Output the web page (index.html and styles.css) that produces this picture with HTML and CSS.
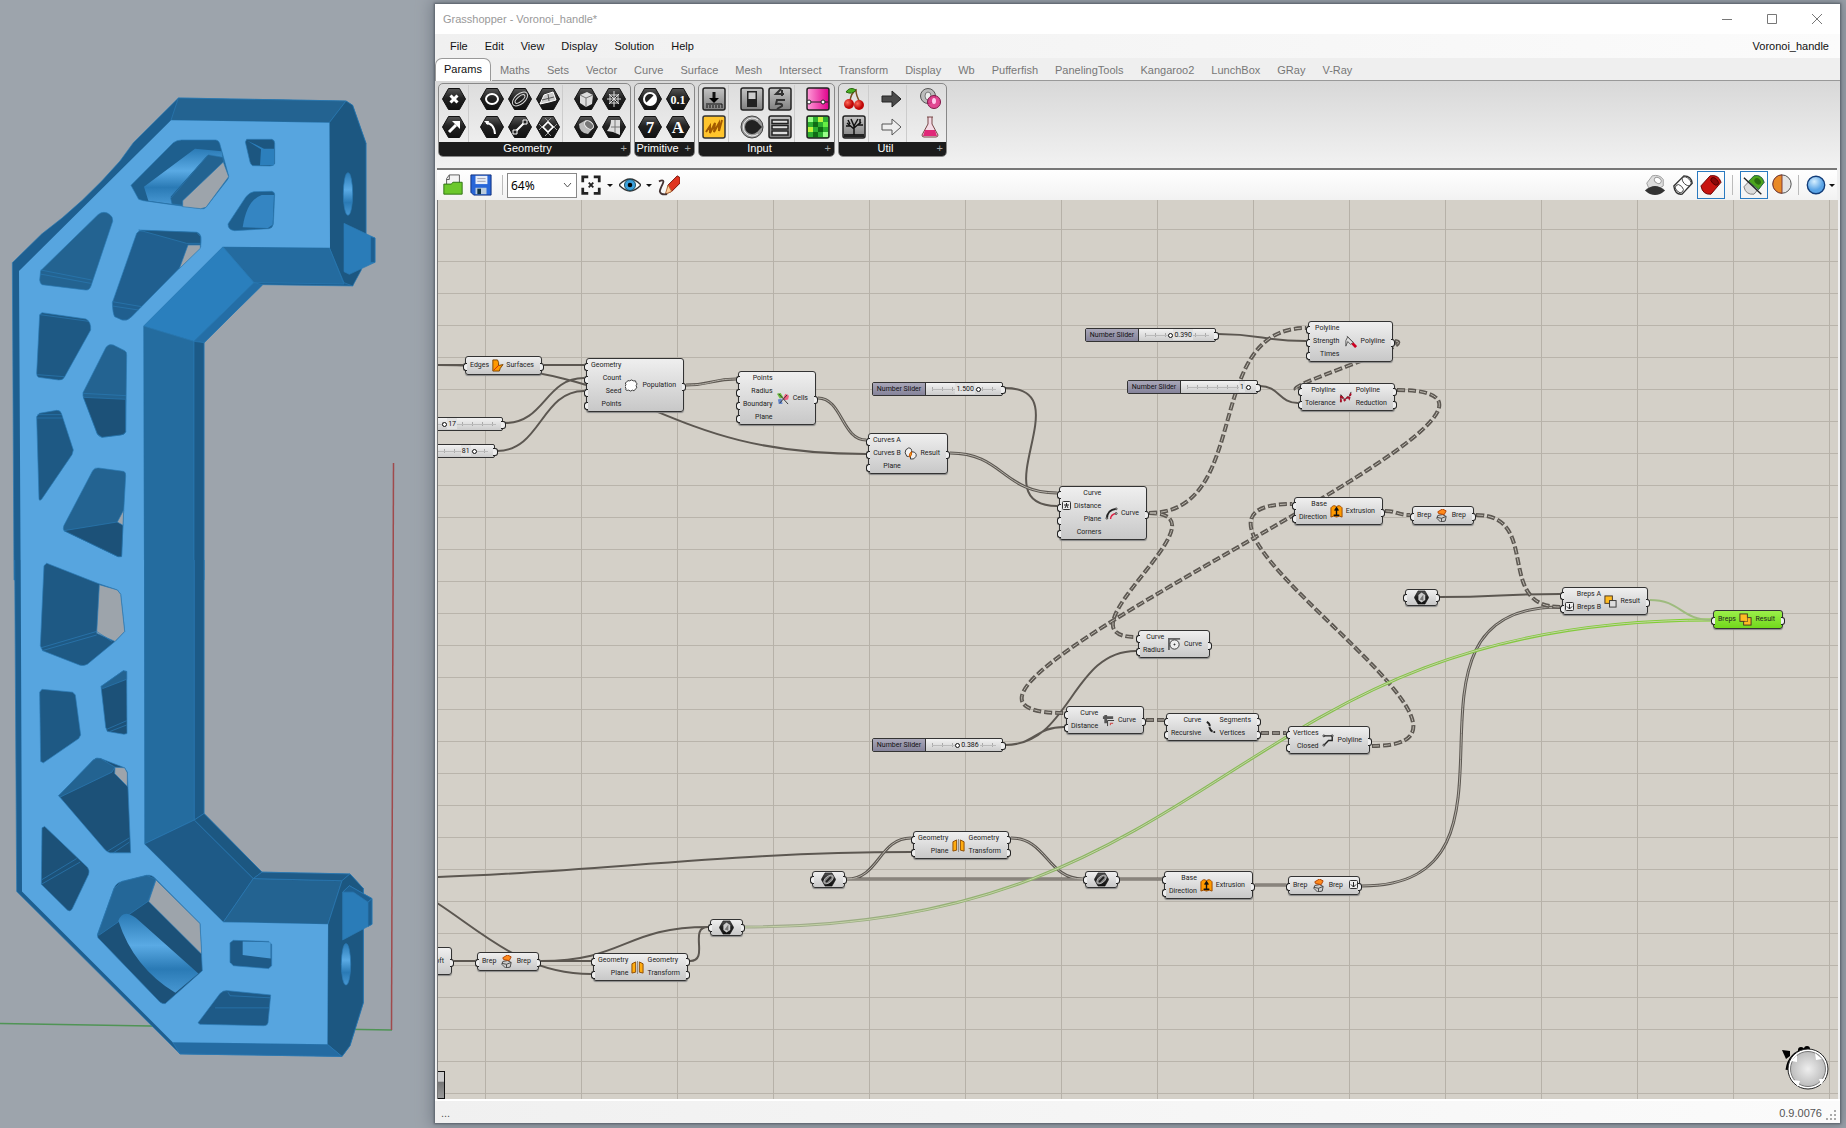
FILE: index.html
```html
<!DOCTYPE html>
<html lang="en">
<head>
<meta charset="utf-8">
<title>Grasshopper - Voronoi_handle*</title>
<link rel="stylesheet" href="styles.css">
</head>
<body>
<svg class="defs" aria-hidden="true">
  <defs>
    <linearGradient id="gHex" x1="0" y1="0" x2="0" y2="1"><stop offset="0" stop-color="#555"/><stop offset=".45" stop-color="#222"/><stop offset="1" stop-color="#111"/></linearGradient>
    <linearGradient id="gGrey" x1="0" y1="0" x2="0" y2="1"><stop offset="0" stop-color="#c4c4c4"/><stop offset="1" stop-color="#808080"/></linearGradient>
    <linearGradient id="gPink" x1="0" y1="0" x2="1" y2="0"><stop offset="0" stop-color="#ff9ad8"/><stop offset="1" stop-color="#e0008c"/></linearGradient>
    <linearGradient id="gBore" x1="0" y1="0" x2="0" y2="1"><stop offset="0" stop-color="#2a7ab5"/><stop offset=".4" stop-color="#5aaae4"/><stop offset=".7" stop-color="#2a7ab5"/><stop offset="1" stop-color="#4797d2"/></linearGradient>
    <linearGradient id="gWire" gradientUnits="userSpaceOnUse" x1="308" y1="0" x2="1274" y2="0"><stop offset="0" stop-color="#a3a992"/><stop offset=".35" stop-color="#8bb563"/><stop offset="1" stop-color="#80d030"/></linearGradient>
    <radialGradient id="gBlue" cx=".4" cy=".3"><stop offset="0" stop-color="#d6efff"/><stop offset="1" stop-color="#5aa4e6"/></radialGradient>
    <radialGradient id="gKnob"><stop offset="0" stop-color="#eee"/><stop offset="1" stop-color="#bdbdbd"/></radialGradient>
    <radialGradient id="gRed" cx=".35" cy=".35"><stop offset="0" stop-color="#ff6a5a"/><stop offset="1" stop-color="#c00808"/></radialGradient>

    <g id="hex"><path d="M6.500 1.500h11L23.500 12l-6 10.500h-11L.5 12z" fill="url(#gHex)" stroke="#111"/></g>
    <g id="tile"><rect x="1" y="1" width="22" height="22" rx="2" fill="url(#gGrey)" stroke="#222" stroke-width="1.500"/></g>

    <symbol id="n-surface" viewBox="0 0 14 14"><path d="M2 1h5q2 3 1 6l5-1-3 4-1 3H2z" fill="#f90" stroke="#7a4300"/><path d="M3 12l5-5" stroke="#c21"/></symbol>
    <symbol id="n-cloud" viewBox="0 0 14 14"><path d="M2 3q1-2 3-1 2-2 4 0 3-1 3 2 2 1 0 3 2 3-1 4-1 3-3 1-2 2-4 0-4 1-3-2-2-2 0-4-2-2 1-3z" fill="#fff" stroke="#333"/></symbol>
    <symbol id="n-cells" viewBox="0 0 14 14"><path d="M1 2l4-1 3 5-4 1z" fill="#6cc040"/><path d="M8 6l2-4 4 2-1 4-4 1z" fill="#f06080"/><path d="M2 8l4-1 1 6-4 0z" fill="#68c"/><path d="M3 2l10 11M12 3l-8 9" stroke="#333"/></symbol>
    <symbol id="n-region" viewBox="0 0 14 14"><path d="M5 1q4 0 3 5-1 5-5 4Q0 6 2 3zM9 5q5 1 4 5-2 4-6 3-1-5 2-8z" fill="#fff" fill-opacity=".6" stroke="#333"/><path d="M8 5q-3 2-2 6 3-2 2-6z" fill="#fa2" stroke="#c50"/></symbol>
    <symbol id="n-offset" viewBox="0 0 14 14"><path d="M2 13Q2 3 12 2" fill="none" stroke="#222" stroke-width="2"/><path d="M6 13q0-5 6-6" fill="none" stroke="#d24" stroke-width="1.500"/><g fill="#fff" stroke="#333"><circle cx="2" cy="12" r="1"/><circle cx="12" cy="2" r="1"/><circle cx="12" cy="7" r="1"/></g></symbol>
    <symbol id="n-smooth" viewBox="0 0 14 14"><path d="M2 12V6l2-4 6 6-3 2-3-3z" fill="#ddd" stroke="#555"/><path d="M9 9l4 4" stroke="#c02" stroke-width="3"/><path d="M3 1l7 7" stroke="#555"/></symbol>
    <symbol id="n-reduce" viewBox="0 0 14 14"><path d="M2 12V4l4 5 5-3 2-5" fill="none" stroke="#333"/><path d="M2 12V5l4 5 4-4 1 2 2-6" fill="none" stroke="#a81028" stroke-width="2" stroke-dasharray="3 1"/></symbol>
    <symbol id="n-extrude" viewBox="0 0 14 14"><path d="M1 3q3-4 6-1 3-3 6 1v10q-3-2-6 0-3-2-6 0z" fill="#ff9a00" stroke="#984800"/><path d="M7 12V4M5 6l2-3 2 3M4 11h6" fill="none" stroke="#111" stroke-width="1.500"/></symbol>
    <symbol id="n-cap" viewBox="0 0 14 14"><path d="M3 7l5-1 4 2-1 5-5 1-4-4z" fill="#ccc" stroke="#444"/><path d="M2 9l5 1 5-2M7 10v4" stroke="#444" fill="none"/><path d="M3 3l5-3 4 2-2 4-6-1z" fill="#ff8a1c" stroke="#b04000"/></symbol>
    <symbol id="n-union" viewBox="0 0 14 14"><rect x="5" y="5" width="8" height="8" fill="#fb2" stroke="#432"/><rect x="1" y="1" width="8" height="8" fill="#fb2" stroke="#432"/><path d="M6 5h3v4H6z" fill="#fb2"/></symbol>
    <symbol id="n-diff" viewBox="0 0 14 14"><rect x="1" y="1" width="8" height="8" fill="#fb2" stroke="#432"/><rect x="6" y="6" width="7" height="7" fill="#ddd" stroke="#333"/></symbol>
    <symbol id="n-fillet" viewBox="0 0 14 14"><path d="M1 13V1h12" fill="none" stroke="#666" stroke-width="2"/><circle cx="7" cy="7" r="5" fill="#eee" stroke="#333"/><path d="M7 6v2M6 7h2" stroke="#333"/></symbol>
    <symbol id="n-loose" viewBox="0 0 14 14"><path d="M1 4h11M4 1v9" stroke="#555" stroke-width="3"/><path d="M6 13V7h7" fill="none" stroke="#333"/><path d="M9 12v-2h3" stroke="#c33" fill="none"/></symbol>
    <symbol id="n-explode" viewBox="0 0 14 14"><path d="M3 1q4 2 3 6 1 5 6 5" fill="none" stroke="#222" stroke-width="2" stroke-dasharray="6 1"/></symbol>
    <symbol id="n-poly" viewBox="0 0 14 14"><path d="M2 2h9v5H7l-5 5" fill="none" stroke="#222" stroke-width="1.500"/><g fill="#fff" stroke="#222"><circle cx="2" cy="2" r="1"/><circle cx="11" cy="2" r="1"/><circle cx="2" cy="12" r="1"/></g></symbol>
    <symbol id="n-mirror" viewBox="0 0 14 14"><path d="M1 3l4-2v11l-4 1zM13 3L9 1v11l4 1z" fill="#ffac10" stroke="#8a4a00"/><path d="M7 0v14" stroke="#888"/></symbol>
    <symbol id="n-mesh" viewBox="0 0 24 24"><use href="#hex"/><path d="M7 8l5-4 6 4v8l-6 4-5-4z" fill="#ccc"/><path d="M9 15l6-8v10z" fill="#777"/></symbol>
    <symbol id="n-curve" viewBox="0 0 24 24"><use href="#hex"/><ellipse cx="12" cy="12" rx="9" ry="5" transform="rotate(-40 12 12)" fill="#888" stroke="#ddd"/><path d="M8 16l8-8" stroke="#222" stroke-width="3"/></symbol>
    <symbol id="n-flat" viewBox="0 0 9 9"><rect x=".5" y=".5" width="8" height="8" rx="1" fill="#eee" stroke="#333"/><path d="M4.500 2v5M2 4.500L4.500 7 7 4.500" fill="none" stroke="#222"/></symbol>
    <symbol id="n-graft" viewBox="0 0 9 9"><rect x=".5" y=".5" width="8" height="8" rx="1" fill="#eee" stroke="#333"/><path d="M2 4h5M4.500 2v2M3 7l1.500-3L6 7" fill="none" stroke="#222"/></symbol>
  </defs>
</svg>

<main class="desktop">
  <section class="viewport" aria-label="Model viewport">
    <svg class="model" viewBox="0 0 435 1128">
      <g fill="none" stroke-width="1.500"><path d="M0 1023.500L392 1030" stroke="#4f9455"/><path d="M393.500 463L391.500 1030" stroke="#a04a4c"/></g>
      <g transform="translate(0 80) scale(.33333)" stroke="#2b7ab4" stroke-width="2" stroke-linejoin="round">
        <path fill="#1e5f90" d="M535 54L1038 63 1058 76 1098 190V470L1058 618 788 614 612 788V1500H42L37 548 125 462Q250 370 360 243L400 188z"/>
        <path fill="#236391" d="M535 54L1038 63 988 128 513 121z"/>
        <path fill="#1c5781" d="M988 128L1038 63 1058 76 1098 190V470L1084 570 1058 618 1032 608 988 503z"/>
        <path fill="#246b9f" d="M668 500L988 503 1032 612 762 608z"/>
        <path fill="#2a7fbd" d="M668 500L762 608 582 784 430 738z"/>
        <path fill="#246ea6" d="M762 608L788 614 612 788 582 784z"/>
        <path fill="#246c9f" d="M430 738L582 784V1500H432z"/>
        <path fill="#1c5a87" d="M582 784L612 788V1500H582z"/>
        <path fill="#57a5df" stroke="none" d="M513 121L988 128 990 503 668 500 430 738 432 1500H62L57 573z"/>
        <path fill="#2a7cb8" d="M1032 430L1125 474V547L1048 583 1032 575z"/><path fill="#1e5f90" d="M1112 470L1125 474V547L1112 547z"/>
        <ellipse cx="1044" cy="342" rx="14" ry="64" fill="url(#gBore)"/>
        <path fill="#1e5f8e" d="M393 316L520 188Q530 180 545 180H648Q656 181 659 190L686 288Q686 296 680 302L618 382Q612 388 602 386L430 362 416 358z"/>
        <path fill="url(#gBore)" stroke="none" d="M432 320L585 206 665 214 668 232 622 226 512 350 516 372 445 362z"/>
        <path fill="#236391" d="M512 355L625 224 668 232 672 248 548 376 516 372z"/>
        <path fill="#9da4ab" d="M548 362L670 246 686 290 618 382 602 386 548 380z"/>
        <path fill="#1c5680" d="M740 178H815Q824 180 824 190V250Q822 258 810 258L758 257Q752 254 750 246L736 186z"/><path fill="#2c7fbc" stroke="none" d="M742 182L783 208 780 256H822V206H792z"/>
        <path fill="#1e5f8e" d="M684 432L738 350Q750 336 762 335L815 334Q824 336 824 344L820 432Q818 444 806 446L704 452Q684 450 684 432z"/><path fill="#3485c2" stroke="none" d="M728 442Q740 360 785 345H822L818 434 804 444z"/>
        <path fill="#236391" d="M122 572L294 404Q312 390 330 404 340 412 338 424L273 618Q268 632 256 630L126 614Q120 610 119 600z"/><path fill="none" d="M122 570L275 600M120 582L272 610"/>
        <path fill="#205f8f" d="M410 460Q416 450 430 452L590 457Q604 460 603 480L602 500 395 710Q382 724 366 720L344 710Q338 700 337 668z"/><path fill="#1e5882" d="M416 450L590 457 602 470 602 490 560 490z"/><path fill="#9da4ab" d="M564 495H601V505L538 566z"/><path fill="none" d="M337 665L425 680M337 678L415 690"/>
        <path fill="#1e5984" d="M119 704L126 698 258 717Q274 726 272 750L194 890Q188 902 176 900L116 892Q110 890 110 880z"/><path fill="none" d="M120 704L266 724M112 884L192 890"/>
        <path fill="#236391" d="M318 802Q326 790 340 795L374 812Q381 816 380 826L377 1055Q374 1064 362 1065L306 1072Q296 1070 292 1062L249 948V938z"/><path fill="#1c5178" d="M250 952L377 958V1055Q374 1064 362 1065L306 1072 292 1062z"/><path fill="none" d="M250 940L378 947"/>
        <path fill="#1e5984" d="M110 1010L118 1000 170 991Q180 990 184 1000L220 1110 216 1124 126 1256Q118 1266 117 1256z"/><path fill="none" d="M112 1004L184 1004M111 1014L188 1014"/>
        <path fill="#236391" d="M278 1172Q284 1162 296 1164L370 1174Q378 1176 377 1188L369 1330 365 1425Q364 1432 354 1430L192 1352Q188 1346 192 1336z"/><path fill="#1c5178" d="M192 1352L352 1326 369 1334 365 1430 354 1430z"/><path fill="#9da4ab" d="M352 1326L371 1290 369 1336z"/>
      </g>
      <g transform="translate(0 560) scale(.33333 .35714)" stroke="#2b7ab4" stroke-width="2" stroke-linejoin="round">
        <path fill="#1e5f90" d="M612 0V710L786 874 1050 879 1090 920V1240L1050 1360 1026 1390 540 1383 50 928 44 0"/>
        <path fill="#246c9f" d="M583 0V728L433 795 432 0"/>
        <path fill="#1c5a87" d="M612 0V710L583 728V0"/>
        <path fill="#1e5a87" d="M583 728L760 892 670 1014 433 795z"/>
        <path fill="#1c5781" d="M583 728L612 710 786 874 760 892z"/>
        <path fill="#236391" d="M760 892L1026 898 984 1020 670 1014z"/>
        <path fill="#1e5a87" d="M760 892L786 874 1050 879 1026 898z"/>
        <path fill="#1c5781" d="M984 1020L1026 898 1050 879 1090 920V1240L1050 1360 1026 1390 982 1356z"/>
        <path fill="#246ba2" d="M518 1350L982 1356 1026 1390 540 1383z"/>
        <path fill="#57a5df" stroke="none" d="M62 0H432L433 795 670 1014 984 1020 982 1356 518 1350 66 928z"/>
        <path fill="#2a7cb8" d="M1028 930L1048 912 1116 948V1020L1028 1064z"/><path fill="#1e5f90" d="M1028 930L1048 912 1116 948 1104 958 1060 930zM1104 958L1116 948V1020L1104 1026z"/>
        <ellipse cx="1038" cy="1132" rx="14" ry="58" fill="url(#gBore)"/>
        <path fill="#1e5984" d="M132 16L140 9 295 66 352 84 362 96 374 200 345 228 262 292Q250 298 238 294L128 254 121 240z"/><path fill="#9da4ab" d="M298 69L352 84 362 96 374 200 345 228 290 205z"/><path fill="none" d="M122 246L290 200 336 228M126 254L290 210"/>
        <path fill="#1e5984" d="M119 370L126 362 218 370 226 378 242 490 236 500 130 568 122 564z"/>
        <path fill="#1c5178" d="M303 354L370 310 380 312 381 486 372 488 322 480 317 468z"/><path fill="#236391" d="M303 354L370 310 380 312V334L308 360z"/><path fill="none" d="M318 475L380 450M330 480L380 462"/>
        <path fill="#1c5178" d="M176 660L280 560Q290 552 302 556L374 582 382 594 392 820 330 820Q320 818 312 808z"/><path fill="#236391" d="M176 660L280 560Q290 552 302 556L345 580 336 594 180 664z"/><path fill="#9da4ab" d="M345 580L374 582 382 596V634L344 598z"/><path fill="none" d="M322 816L388 778M340 820L388 790"/>
        <path fill="#1c5178" d="M126 750L134 746 262 860Q270 870 266 880L216 978Q210 986 202 980L124 908z"/><path fill="none" d="M124 896L230 836M124 908L240 846"/>
        <path fill="#1c5178" d="M292 1050L342 920Q348 904 366 900L440 883Q456 880 468 894L600 1018 607 1150 496 1242Q490 1244 480 1238L294 1058z"/><path fill="#246798" d="M292 1050L342 920 366 900 440 883 468 894 444 956 298 1050z"/><path fill="url(#gBore)" stroke="none" d="M355 1010Q372 970 420 1012L595 1158 526 1212Q400 1140 355 1010z"/><path fill="#9da4ab" d="M468 896L600 1018 605 1104 446 956z"/>
        <path fill="#1e5a87" d="M690 1072L700 1065 806 1068 815 1076V1136L806 1144 700 1136 690 1126z"/><path fill="#4a9bd6" stroke="none" d="M728 1068L812 1070V1116L728 1106z"/>
        <path fill="#1e5a87" d="M594 1296L660 1214Q670 1204 684 1206L812 1218 804 1296Q802 1304 792 1304L600 1300z"/><path fill="none" d="M645 1254H808M684 1210L690 1220 812 1226"/>
      </g>
    </svg>
  </section>

  <section class="window">
    <header class="titlebar">
      <h1>Grasshopper - Voronoi_handle*</h1>
      <div class="winbtns">
        <button aria-label="Minimize"><svg viewBox="0 0 12 12"><path d="M1 6.500h10"/></svg></button>
        <button aria-label="Maximize"><svg viewBox="0 0 12 12"><path d="M1.500 1.500h9v9h-9z"/></svg></button>
        <button aria-label="Close"><svg viewBox="0 0 12 12"><path d="M1 1l10 10M11 1L1 11"/></svg></button>
      </div>
    </header>
    <nav class="menubar">
      <a href="#">File</a><a href="#">Edit</a><a href="#">View</a><a href="#">Display</a><a href="#">Solution</a><a href="#">Help</a>
      <span class="docname">Voronoi_handle</span>
    </nav>
    <nav class="tabs">
      <a class="current" href="#">Params</a><a href="#">Maths</a><a href="#">Sets</a><a href="#">Vector</a><a href="#">Curve</a><a href="#">Surface</a><a href="#">Mesh</a><a href="#">Intersect</a><a href="#">Transform</a><a href="#">Display</a><a href="#">Wb</a><a href="#">Pufferfish</a><a href="#">PanelingTools</a><a href="#">Kangaroo2</a><a href="#">LunchBox</a><a href="#">GRay</a><a href="#">V-Ray</a>
    </nav>

    <div class="ribbon">
      <section class="group">
        <div class="tools">
          <div class="col">
            <button aria-label="Point"><svg viewBox="0 0 24 24"><use href="#hex"/><path d="M8.500 8.500l7 7M15.500 8.500l-7 7" stroke="#fff" stroke-width="3"/></svg></button>
            <button aria-label="Vector"><svg viewBox="0 0 24 24"><use href="#hex"/><path d="M7 17l7-7" stroke="#fff" stroke-width="3"/><path d="M10 6h8v8z" fill="#fff"/></svg></button>
          </div>
          <div class="col">
            <button aria-label="Circle"><svg viewBox="0 0 24 24"><use href="#hex"/><ellipse cx="12" cy="12" rx="6" ry="5" fill="none" stroke="#fff" stroke-width="2"/></svg></button>
            <button aria-label="Arc"><svg viewBox="0 0 24 24"><use href="#hex"/><path d="M6 8q8 0 9 11" fill="none" stroke="#fff" stroke-width="2"/><path d="M4 6l5 0-1 4z" fill="#fff"/></svg></button>
          </div>
          <div class="col">
            <button aria-label="Curve"><svg viewBox="0 0 24 24"><use href="#hex"/><g fill="none" stroke="#ddd" transform="rotate(-40 12 12)"><ellipse cx="12" cy="12" rx="9" ry="5"/><ellipse cx="12" cy="12" rx="6" ry="2.500"/></g></svg></button>
            <button aria-label="Line"><svg viewBox="0 0 24 24"><use href="#hex"/><path d="M7 17L17 7" stroke="#fff" stroke-width="2"/><path d="M5 15h4v4H5zM15 5h4v4h-4z" fill="#222" stroke="#fff"/></svg></button>
          </div>
          <div class="col">
            <button aria-label="Plane"><svg viewBox="0 0 24 24"><use href="#hex"/><path d="M4 17l4-9 9-3 3 8-7 2z" fill="#ccc" stroke="#fff"/><path d="M6 13l12-3M12 7l1 7" stroke="#555"/></svg></button>
            <button aria-label="Rectangle"><svg viewBox="0 0 24 24"><use href="#hex"/><path d="M15 3L3 15M21 9L9 21M9 3l12 12M3 9l12 12" fill="none" stroke="#999"/><path d="M12 7l5 5-5 5-5-5z" fill="#333" stroke="#fff" stroke-width="1.500"/></svg></button>
          </div>
          <div class="col">
            <button aria-label="Box"><svg viewBox="0 0 24 24"><use href="#hex"/><path d="M6 8l7-3 6 3-1 9-6 3-6-4z" fill="#ddd"/><path d="M6 8l6 3 7-3M12 11v9" stroke="#777" fill="none"/></svg></button>
            <button aria-label="Brep"><svg viewBox="0 0 24 24"><use href="#hex"/><path d="M5 9l7-4 8 7-6 7q-9-1-9-10z" fill="#bbb"/><ellipse cx="15" cy="10" rx="5" ry="3.500" transform="rotate(40 15 10)" fill="#777" stroke="#eee"/></svg></button>
          </div>
          <div class="col">
            <button aria-label="Mesh"><svg viewBox="0 0 24 24"><use href="#hex"/><path d="M12 4v16M5 12h14M7 7l10 10M17 7L7 17M8 8h8v8H8z" fill="none" stroke="#ddd"/></svg></button>
            <button aria-label="Surface"><svg viewBox="0 0 24 24"><use href="#hex"/><path d="M9 5h9v15l-7-3-6-1q4-5 4-11z" fill="#ddd"/><path d="M13 5v13M9 12h9" stroke="#777"/></svg></button>
          </div>
        </div>
        <h2>Geometry<span class="plus">+</span></h2>
      </section>
      <section class="group">
        <div class="tools">
          <div class="col">
            <button aria-label="Boolean"><svg viewBox="0 0 24 24"><use href="#hex"/><circle cx="12" cy="12" r="6" fill="#222" stroke="#fff" stroke-width="2"/><path d="M16.500 7.500a6 6 0 0 1-9 9z" fill="#fff"/></svg></button>
            <button aria-label="Integer"><svg viewBox="0 0 24 24"><use href="#hex"/><text x="12" y="18">7</text></svg></button>
          </div>
          <div class="col">
            <button aria-label="Number"><svg viewBox="0 0 24 24"><use href="#hex"/><text class="small" x="12" y="17">0.1</text></svg></button>
            <button aria-label="Text"><svg viewBox="0 0 24 24"><use href="#hex"/><text x="12" y="18">A</text></svg></button>
          </div>
        </div>
        <h2>Primitive<span class="plus">+</span></h2>
      </section>
      <section class="group">
        <div class="tools">
          <div class="col">
            <button aria-label="Button"><svg viewBox="0 0 24 24"><use href="#tile"/><path d="M12 5v7" stroke="#111" stroke-width="3"/><path d="M7 11h10l-5 5z"/><path d="M4 17h16v4M5 18v3M8 18v3M11 18v3M14 18v3M17 18v3" fill="none" stroke="#111"/></svg></button>
            <button aria-label="Graph"><svg viewBox="0 0 24 24"><rect x="1" y="1" width="22" height="22" rx="2" fill="#ffc42c" stroke="#333" stroke-width="1.500"/><path d="M4 17l4-6v7l5-10-1 9 5-9v8l3-11" fill="none" stroke="#a35a00" stroke-width="2"/></svg></button>
          </div>
          <div class="col">
            <button aria-label="Toggle"><svg viewBox="0 0 24 24"><use href="#tile"/><path d="M7 4h10v16H7z" fill="#222"/><path d="M8.500 5.500h7V12h-7z" fill="#ccc"/></svg></button>
            <button aria-label="Knob"><svg viewBox="0 0 24 24"><circle cx="12" cy="12" r="11" fill="#999" stroke="#444"/><path d="M18 5a9 9 0 1 0 0 14" fill="none" stroke="#eee"/><circle cx="12" cy="12" r="7" fill="#222"/><path d="M17 7l5 5-5 5z" fill="#222"/></svg></button>
          </div>
          <div class="col">
            <button aria-label="Scroller"><svg viewBox="0 0 24 24"><use href="#tile"/><path d="M13 2L8 7h8M14 3v6M17 13H9l-1 4q7-1 6 2l-5 3" fill="none" stroke="#333" stroke-width="2"/></svg></button>
            <button aria-label="List"><svg viewBox="0 0 24 24"><use href="#tile"/><path d="M4 5h16v3.500H4zM4 10.500h16V14H4zM4 16h16v4H4z" fill="#ddd" stroke="#222" stroke-width="1.500"/></svg></button>
          </div>
          <div class="col">
            <button aria-label="Gradient"><svg viewBox="0 0 24 24"><rect x="1" y="1" width="22" height="22" rx="2" fill="url(#gPink)" stroke="#222" stroke-width="1.500"/><path d="M2 15h20" stroke="#222"/><g fill="#fff" stroke="#222"><circle cx="3" cy="15" r="2"/><circle cx="17" cy="15" r="2"/></g></svg></button>
            <button aria-label="Swatch"><svg viewBox="0 0 24 24"><rect x="1" y="1" width="22" height="22" rx="2" fill="#2cae30" stroke="#222" stroke-width="1.500"/><path d="M2 2h5v5H2zM17 17h5v5h-5z" fill="#9f8"/><path d="M12 2h5v5h-5zM2 12h5v5H2z" fill="#bdf53c"/><path d="M7 7h5v5H7zM12 12h5v5h-5zM7 17h5v5H7z" fill="#106c14"/><path d="M17 7h5v5h-5z" fill="#6e4"/></svg></button>
          </div>
        </div>
        <h2>Input<span class="plus">+</span></h2>
      </section>
      <section class="group">
        <div class="tools">
          <div class="col">
            <button aria-label="Cherry picker"><svg viewBox="0 0 24 24"><path d="M8 14Q9 6 14 3q0 6 4 12" fill="none" stroke="#785020" stroke-width="1.500"/><path d="M14 3Q8-1 4 5q6 3 10-2z" fill="#4ab020" stroke="#286810"/><circle cx="7" cy="17" r="5" fill="url(#gRed)"/><circle cx="17" cy="18" r="5" fill="url(#gRed)"/></svg></button>
            <button aria-label="Param viewer"><svg viewBox="0 0 24 24"><use href="#tile"/><path d="M2 19h20v3H2z" fill="#222"/><path d="M12 20v-9M12 14L5 8M12 13l7-6M12 11L9 4M12 11l4-7M8 11H4M16 10h5M6 5l2 4M18 4v5" stroke="#111" stroke-width="1.500"/></svg></button>
          </div>
          <div class="col">
            <button aria-label="Data output"><svg viewBox="0 0 24 24"><path d="M2 9h10V4l9 8-9 8v-5H2z" fill="#4a4a4a" stroke="#222"/></svg></button>
            <button aria-label="Data input"><svg viewBox="0 0 24 24"><path d="M2 9h10V4l9 8-9 8v-5H2z" fill="#eee" stroke="#555"/></svg></button>
          </div>
          <div class="col">
            <button aria-label="Cluster"><svg viewBox="0 0 24 24"><circle cx="10" cy="9" r="7.500" fill="#bbb" stroke="#555"/><ellipse cx="10" cy="9" rx="3" ry="4" fill="#eee" stroke="#777"/><circle cx="16" cy="15" r="6.500" fill="#e02c84" fill-opacity=".85" stroke="#801848"/><ellipse cx="16" cy="14" rx="2" ry="3" fill="#fce"/></svg></button>
            <button aria-label="Galapagos"><svg viewBox="0 0 24 24"><path d="M9 2h6M10 2v7L4 20q0 2 2 2h12q2 0 2-2L14 9V2" fill="#f4dbe6" stroke="#744"/><path d="M7 15h10l2 6H5z" fill="#e02878"/></svg></button>
          </div>
        </div>
        <h2>Util<span class="plus">+</span></h2>
      </section>
    </div>

    <div class="toolbar">
      <button aria-label="Open"><svg viewBox="0 0 24 24"><path d="M5 12V5l3-4h11v11z" fill="#f4f4f4" stroke="#555"/><path d="M5 6h3V1" fill="none" stroke="#555"/><path d="M2 11h8l2-2h10v13H2z" fill="#6cc82c" stroke="#2a6e10"/></svg></button>
      <button aria-label="Save"><svg viewBox="0 0 24 24"><path d="M1 1h22v22H4l-3-3z" fill="#2866d8" stroke="#0c2c78"/><path d="M6 2h13v9H6z" fill="#e8eef8"/><path d="M8 5h9M8 8h9" stroke="#99a"/><path d="M6 15h12v7H6z" fill="#bcd"/><path d="M8 16h4v6H8z" fill="#134"/></svg></button>
      <span class="sep"></span>
      <select aria-label="Zoom"><option>64%</option></select>
      <button aria-label="Zoom extents"><svg viewBox="0 0 24 24"><path d="M3 9V3h6M15 3h6v6M21 15v6h-6M9 21H3v-6" fill="none" stroke="#222" stroke-width="3"/><path d="M9.500 9.500l5 5M14.500 9.500l-5 5" stroke="#222" stroke-width="2"/></svg></button>
      <span class="caret"></span>
      <button aria-label="Preview"><svg viewBox="0 0 24 24"><path d="M0 12Q12-1 24 12 12 25 0 12z" fill="#fff" stroke="#333" stroke-width="1.500"/><circle cx="12" cy="12" r="6" fill="#3aa0dc" stroke="#145"/><circle cx="12" cy="12" r="2.500"/></svg></button>
      <span class="caret"></span>
      <button aria-label="Sketch"><svg viewBox="0 0 24 24"><path d="M11 12L21 2l3 2v6l-9 9-5 2z" fill="#e03420" stroke="#701008"/><path d="M11 12l-3 10 7-3z" fill="#fc9" stroke="#a63"/><path d="M1 8q7-3 4 3t-3 8q1 4 8 3" fill="none" stroke="#433" stroke-width="2"/></svg></button>
      <span class="spacer"></span>
      <button aria-label="No preview"><svg viewBox="0 0 24 24"><path d="M3 10l6-8q8-2 12 4v7l-8 5-8-3z" fill="#ddd" stroke="#999"/><path d="M1 18q11-10 22 0-11 10-22 0z" fill="#333"/><ellipse cx="15" cy="7" rx="4" ry="3" transform="rotate(35 15 7)" fill="#fff" stroke="#999"/></svg></button>
      <button aria-label="Wireframe"><svg viewBox="0 0 24 24"><path d="M2 13L13 2q8 0 9 8L11 22Q3 23 2 13z" fill="#fff" stroke="#333" stroke-width="1.500"/><ellipse cx="16" cy="8" rx="6" ry="3.500" transform="rotate(45 16 8)" fill="none" stroke="#444"/><ellipse cx="8" cy="16" rx="5" ry="3.500" transform="rotate(45 8 16)" fill="none" stroke="#444"/></svg></button>
      <button class="on" aria-label="Shaded"><svg viewBox="0 0 24 24"><path d="M1 13L11 2q9-2 12 7L12 22Q3 23 1 13z" fill="#c81410" stroke="#600"/><ellipse cx="16" cy="8" rx="5" ry="3" transform="rotate(45 16 8)" fill="#8a0808" stroke="#500"/></svg></button>
      <span class="sep"></span>
      <button class="on" aria-label="Selected only"><svg viewBox="0 0 24 24"><path d="M1 14L12 2q8-2 11 7L12 22Q3 23 1 14z" fill="#ddd" stroke="#777"/><path d="M6 8l6-6q8-2 11 7l-6 8z" fill="#4ca41c" stroke="#264"/><ellipse cx="16" cy="8" rx="4" ry="3" transform="rotate(45 16 8)" fill="#2a6c10"/><path d="M1 4l19 18" stroke="#222" stroke-width="1.500"/></svg></button>
      <button aria-label="Document preview"><svg viewBox="0 0 24 24"><circle cx="12" cy="11" r="10" fill="#e4e4e4" stroke="#444"/><path d="M12 1a10 10 0 0 0 0 20z" fill="#e88a28" stroke="#733"/></svg></button>
      <span class="sep tight"></span>
      <button aria-label="Mesh quality"><svg viewBox="0 0 24 24"><circle cx="12" cy="12" r="9.500" fill="url(#gBlue)" stroke="#123c78" stroke-width="1.500"/></svg></button>
      <span class="caret last"></span>
    </div>

    <div class="canvas">
      <svg class="wires" aria-hidden="true">
        <defs>
          <g id="doubleWires"><path d="M249 185C275 185 275 179 299 179M381 198C405 198 405 240 429 240M513 253C566 253 566 293 620 293M410 679C442 679 442 638 474 638M410 679H646M574 638C610 638 610 679 646 679M683 679H725M818 685H849M925 686C1115 686 933 407 1123 407"/></g>
          <g id="dashWires"><path d="M712 313C817 313 764 128 869 128M958 141C985 144 838 188 861 190M960 190C1190 190 397 513 627 513M712 313C797 313 614 437 699 437M935 546C1105 546 685 304 855 304M948 311C960 311 960 315 973 315M1039 315C1105 315 1057 407 1123 407M709 520H727M824 533H849"/></g>
          <path id="greenWire" d="M308 727C791 727 791 420 1274 420"/>
        </defs>
        <g class="wire"><path d="M0 165H26M107 165H147M0 165C215 165 215 254 429 254M68 223C108 223 108 178 147 178M60 251C104 251 104 191 147 191M568 188C646 188 542 306 620 306M781 134C825 134 825 141 869 141M823 186C842 186 842 203 861 203M1003 397C1063 397 1063 394 1123 394M568 545C634 545 634 451 699 451M568 545C598 545 598 527 627 527M0 677C160 672 290 652 474 652M0 703C45 732 86 774 154 774M17 761H38M104 761H154M104 761C188 761 188 727 271 727M253 761C273 761 251 727 271 727"/></g>
        <use class="outer" href="#doubleWires"/><use class="inner" href="#doubleWires"/>
        <use class="dash-outer" href="#dashWires"/><use class="dash-inner" href="#dashWires"/>
        <use class="green-outer" href="#greenWire"/><use class="green-inner" href="#greenWire"/>
        <path class="light" d="M1213 400C1244 400 1244 420 1274 420"/>
      </svg>

      <div class="node at-surfaces"><ul class="in"><li>Edges</li></ul><svg><use href="#n-surface"/></svg><ul class="out"><li>Surfaces</li></ul></div>
      <div class="node at-population"><ul class="in"><li>Geometry</li><li>Count</li><li>Seed</li><li>Points</li></ul><svg><use href="#n-cloud"/></svg><ul class="out"><li>Population</li></ul></div>
      <div class="node at-cells"><ul class="in"><li>Points</li><li>Radius</li><li>Boundary</li><li>Plane</li></ul><svg><use href="#n-cells"/></svg><ul class="out"><li>Cells</li></ul></div>
      <div class="node at-region"><ul class="in"><li>Curves A</li><li>Curves B</li><li>Plane</li></ul><svg><use href="#n-region"/></svg><ul class="out"><li>Result</li></ul></div>
      <div class="node at-offset"><ul class="in"><li>Curve</li><li><svg class="mod"><use href="#n-graft"/></svg>Distance</li><li>Plane</li><li>Corners</li></ul><svg><use href="#n-offset"/></svg><ul class="out"><li>Curve</li></ul></div>
      <div class="node at-smooth"><ul class="in"><li>Polyline</li><li>Strength</li><li>Times</li></ul><svg><use href="#n-smooth"/></svg><ul class="out"><li>Polyline</li></ul></div>
      <div class="node at-reduce"><ul class="in"><li>Polyline</li><li>Tolerance</li></ul><svg><use href="#n-reduce"/></svg><ul class="out"><li>Polyline</li><li>Reduction</li></ul></div>
      <div class="node at-extrude"><ul class="in"><li>Base</li><li>Direction</li></ul><svg><use href="#n-extrude"/></svg><ul class="out"><li>Extrusion</li></ul></div>
      <div class="node at-cap"><ul class="in"><li>Brep</li></ul><svg><use href="#n-cap"/></svg><ul class="out"><li>Brep</li></ul></div>
      <div class="node at-diff"><ul class="in"><li>Breps A</li><li><svg class="mod"><use href="#n-flat"/></svg>Breps B</li></ul><svg><use href="#n-diff"/></svg><ul class="out"><li>Result</li></ul></div>
      <div class="node selected at-union"><ul class="in"><li>Breps</li></ul><svg><use href="#n-union"/></svg><ul class="out"><li>Result</li></ul></div>
      <div class="node at-fillet"><ul class="in"><li>Curve</li><li>Radius</li></ul><svg><use href="#n-fillet"/></svg><ul class="out"><li>Curve</li></ul></div>
      <div class="node at-loose"><ul class="in"><li>Curve</li><li>Distance</li></ul><svg><use href="#n-loose"/></svg><ul class="out"><li>Curve</li></ul></div>
      <div class="node at-explode"><ul class="in"><li>Curve</li><li>Recursive</li></ul><svg><use href="#n-explode"/></svg><ul class="out"><li>Segments</li><li>Vertices</li></ul></div>
      <div class="node at-polyline"><ul class="in"><li>Vertices</li><li>Closed</li></ul><svg><use href="#n-poly"/></svg><ul class="out"><li>Polyline</li></ul></div>
      <div class="node at-mirror"><ul class="in"><li>Geometry</li><li>Plane</li></ul><svg><use href="#n-mirror"/></svg><ul class="out"><li>Geometry</li><li>Transform</li></ul></div>
      <div class="node at-extrude-low"><ul class="in"><li>Base</li><li>Direction</li></ul><svg><use href="#n-extrude"/></svg><ul class="out"><li>Extrusion</li></ul></div>
      <div class="node at-cap-low"><ul class="in"><li>Brep</li></ul><svg><use href="#n-cap"/></svg><ul class="out"><li>Brep<svg class="mod"><use href="#n-flat"/></svg></li></ul></div>
      <div class="node at-loft"><ul class="out"><li>oft</li></ul></div>
      <div class="node at-cap-left"><ul class="in"><li>Brep</li></ul><svg><use href="#n-cap"/></svg><ul class="out"><li>Brep</li></ul></div>
      <div class="node at-mirror-left"><ul class="in"><li>Geometry</li><li>Plane</li></ul><svg><use href="#n-mirror"/></svg><ul class="out"><li>Geometry</li><li>Transform</li></ul></div>
      <div class="node param at-brep-a"><svg><use href="#n-mesh"/></svg></div>
      <div class="node param at-brep-b"><svg><use href="#n-mesh"/></svg></div>
      <div class="node param at-curve-a"><svg><use href="#n-curve"/></svg></div>
      <div class="node param at-curve-b"><svg><use href="#n-curve"/></svg></div>

      <div class="slider bare at-count"><div class="rail"><input aria-label="Count" type="range" value="17"><output class="after" style="--v:.17">17</output></div></div>
      <div class="slider bare at-seed"><div class="rail"><input aria-label="Seed" type="range" value="81"><output class="before" style="--v:.81">81</output></div></div>
      <div class="slider at-distance"><label for="s3">Number Slider</label><div class="rail"><input id="s3" type="range" max="2" step=".001" value="1.5"><output class="before" style="--v:.75">1.500</output></div></div>
      <div class="slider at-strength"><label for="s4">Number Slider</label><div class="rail"><input id="s4" type="range" max="1" step=".001" value=".39"><output class="after" style="--v:.39">0.390</output></div></div>
      <div class="slider at-tolerance"><label for="s5">Number Slider</label><div class="rail"><input id="s5" type="range" max="1" value="1"><output class="before" style="--v:1">1</output></div></div>
      <div class="slider at-radius"><label for="s6">Number Slider</label><div class="rail"><input id="s6" type="range" max="1" step=".001" value=".386"><output class="after" style="--v:.386">0.386</output></div></div>

      <div class="drawer"></div>
      <svg class="compass" viewBox="0 0 48 46" aria-hidden="true">
        <path d="M6 24Q8 8 25 4" fill="none" stroke="#000" stroke-width="5"/><path d="M0 4l8 1 0 5-4 3z"/><circle cx="25" cy="3" r="3"/><circle cx="19" cy="4" r="3"/>
        <circle cx="26" cy="23" r="20" fill="#fff" stroke="#222"/><circle cx="26" cy="23" r="17.500" fill="url(#gKnob)" stroke="#777"/>
        <path d="M9 15l6-6 0 7zM33 7l7 6-6 1zM12 34l6 1-2 6zM37 33l6 0-4 6z" fill="#fff"/>
      </svg>
    </div>

    <footer class="status"><span>...</span><span class="version">0.9.0076</span>
      <svg viewBox="0 0 12 12" aria-hidden="true"><path d="M8 0h2v2H8zM8 4h2v2H8zM8 8h2v2H8zM4 4h2v2H4zM4 8h2v2H4zM0 8h2v2H0z"/></svg>
    </footer>
  </section>
</main>
</body>
</html>
```
FILE: styles.css
```css
* { box-sizing: border-box; }
body {
  margin: 0;
  background: #9da4ac;
  font: 11px/14px "Liberation Sans", Arial, sans-serif;
  color: #111;
}
button { border: 0; padding: 0; background: none; }
a { color: inherit; text-decoration: none; }
ul { list-style: none; margin: 0; padding: 0; }
h1, h2 { margin: 0; font: inherit; }
.defs { position: absolute; width: 0; height: 0; }

.desktop { display: flex; min-height: 100vh; }
.viewport { flex: none; width: 435px; }
.model { display: block; width: 100%; }

.window {
  flex: 1;
  min-width: 0;
  display: flex;
  flex-direction: column;
  margin: 4px 6px 5px 0;
  background: #f0f0f0;
  box-shadow: 0 0 2px 1px #596068, 0 0 14px 4px #7a828c;
}
.titlebar {
  display: flex;
  align-items: center;
  justify-content: space-between;
  height: 30px;
  padding: 0 17px 0 8px;
  background: #fff;
  color: #999;
}
.winbtns { display: flex; gap: 33px; }
.winbtns svg { display: block; width: 12px; height: 12px; fill: none; stroke: #777; }
.menubar {
  display: flex;
  align-items: center;
  gap: 17px;
  height: 24px;
  padding: 0 11px 0 15px;
  background: linear-gradient(90deg, #f0f0f0, #fbfbfb);
}
.docname { margin-left: auto; }

.tabs { display: flex; height: 23px; background: #efefef; color: #777; }
.tabs a { padding: 5px 9px 0 8px; border-bottom: 1px solid #999; }
.tabs::after { content: ""; flex: 1; border-bottom: 1px solid #999; border-radius: 0 6px 0 0; }
.tabs .current {
  padding: 3px 8px 0;
  margin-right: 1px;
  border: 1px solid #999;
  border-bottom: 0;
  border-radius: 7px 7px 0 0;
  background: #fff;
  color: #111;
}

.ribbon {
  display: flex;
  align-items: flex-start;
  gap: 3px;
  height: 87px;
  padding: 2px 3px 0;
  background: linear-gradient(#d8d8d8, #f2f2f2);
}
.group {
  border: 1px solid #888;
  border-radius: 5px;
  background: linear-gradient(#ddd, #f2f2f2);
  overflow: hidden;
}
.tools { display: flex; height: 58px; padding: 1px 2px 0 1px; }
.col { flex: none; width: 28px; }
.col button { display: block; width: 28px; height: 28px; }
.col svg { display: block; width: 24px; height: 24px; margin: 0 auto; }
.col text { font: bold 17px "Liberation Serif", serif; fill: #fff; text-anchor: middle; }
.col .small { font-size: 12px; }
.group:nth-child(1) .col:nth-child(2), .group:nth-child(1) .col:nth-child(5),
.group:nth-child(3) .col:nth-child(2), .group:nth-child(3) .col:nth-child(4),
.group:nth-child(4) .col + .col {
  width: 38px;
  padding-left: 9px;
  border-left: 1px solid #ccc;
}
.group h2 {
  position: relative;
  height: 14px;
  padding-right: 14px;
  line-height: 13px;
  background: #1c1c1c;
  color: #fff;
  text-align: center;
}
.plus { position: absolute; right: 3px; top: 0; color: #aaa; }

.toolbar {
  display: flex;
  align-items: center;
  height: 32px;
  margin: 0 3px 0 2px;
  padding: 0 2px;
  border-top: 2px solid #777;
  background: linear-gradient(#fff, #f2f2f2);
}
.toolbar button { flex: none; width: 28px; height: 28px; border: 1px solid transparent; }
.toolbar button.on { border-color: #2a7ac0; }
.toolbar svg { display: block; width: 22px; height: 22px; margin: 0 auto; }
.toolbar .sep { width: 1px; height: 20px; margin: 0 7px; background: #bbb; }
.toolbar .sep.tight { margin: 0 3px 0 2px; }
.toolbar .sep + select { margin-left: -3px; }
.toolbar .spacer { flex: 1; }
.toolbar .caret { border: 3px solid transparent; border-top: 3px solid #111; border-bottom: 0; margin: 0 3px 0 2px; }
.toolbar .caret.last { margin: 0 0 0 -1px; }
.toolbar select {
  appearance: none;
  width: 70px;
  height: 25px;
  padding: 0 3px;
  border: 1px solid #888;
  border-radius: 0;
  background: #fff url("data:image/svg+xml,%3Csvg xmlns='http://www.w3.org/2000/svg' width='9' height='6'%3E%3Cpath d='M1 1l3.500 4L8 1' fill='none' stroke='%23555'/%3E%3C/svg%3E") right 4px center no-repeat;
  font: 12px "Noto Sans", sans-serif;
}

.canvas {
  position: relative;
  flex: 1;
  min-height: 899px;
  margin: 0 2px;
  overflow: hidden;
  background-color: #d4d0c8;
  background-image:
    linear-gradient(90deg, #b6b1a8 1px, transparent 1px),
    linear-gradient(#b9b4ab 1px, transparent 1px);
  background-size: 96px 32px;
  background-position: 47px 29px;
  border-left: 1px solid #777;
}
.wires { position: absolute; left: -1px; top: 0; width: 100%; height: 100%; overflow: visible; fill: none; stroke-width: 2; }
.wire { stroke: #5c5751; }
.outer { stroke: #5c5751; stroke-width: 3; }
.inner { stroke: #b5b1a9; stroke-width: 1; }
.dash-outer { stroke: #5c5751; stroke-width: 4; stroke-dasharray: 8 3; }
.dash-inner { stroke: #bdb9b0; stroke-width: 1; stroke-dasharray: 6 5; stroke-dashoffset: -1; }
.green-outer { stroke: url(#gWire); stroke-width: 3; }
.green-inner { stroke: #c5d3a8; stroke-width: 1; }
.light { stroke: #9ebb7e; }

.node {
  position: absolute;
  z-index: 1;
  display: flex;
  align-items: center;
  justify-content: space-between;
  min-height: 19px;
  padding: 0 7px 0 4px;
  border: 1px solid #333;
  border-radius: 3px;
  background: linear-gradient(#efefef, #c8c8c8);
  box-shadow: 0 1px 1px #888;
  font: 7px/13px Roboto, sans-serif;
  color: #222;
}
.node > svg { flex: none; width: 13px; height: 13px; }
.node li { height: 13px; white-space: nowrap; }
.in { text-align: right; }
.in li::before, .out li::after, .param::before, .param::after {
  content: "";
  position: absolute;
  width: 3px;
  height: 6px;
  border: 1px solid #222;
  background: #eee;
}
.in li::before, .param::before { left: -3px; margin-top: 4px; border-right: 0; border-radius: 3px 0 0 3px; }
.out li::after, .param::after { right: -3px; margin-top: 4px; border-left: 0; border-radius: 0 3px 3px 0; }
.param { width: 33px; height: 17px; min-height: 0; padding: 0; justify-content: center; }
.param::before, .param::after { margin: 0; top: 4px; }
.param > svg { width: 15px; height: 15px; }
.mod { width: 9px; height: 9px; margin: 0 3px 0 -2px; vertical-align: -2px; }
.out .mod { margin: 0 1px 0 6px; }
.selected { background: linear-gradient(#9bf04a, #72d81c); }

.at-surfaces { left: 27px; top: 156px; width: 77px; }
.at-population { left: 148px; top: 158px; width: 98px; }
.at-cells { left: 300px; top: 171px; width: 78px; }
.at-region { left: 430px; top: 233px; width: 80px; }
.at-offset { left: 621px; top: 286px; width: 88px; }
.at-smooth { left: 870px; top: 121px; width: 85px; }
.at-reduce { left: 862px; top: 183px; width: 95px; }
.at-extrude { left: 856px; top: 297px; width: 89px; }
.at-cap { left: 974px; top: 306px; width: 62px; }
.at-diff { left: 1124px; top: 387px; width: 86px; }
.at-union { left: 1275px; top: 410px; width: 70px; }
.at-fillet { left: 700px; top: 430px; width: 72px; }
.at-loose { left: 628px; top: 506px; width: 78px; }
.at-explode { left: 728px; top: 513px; width: 93px; }
.at-polyline { left: 850px; top: 526px; width: 82px; }
.at-mirror { left: 475px; top: 631px; width: 96px; }
.at-extrude-low { left: 726px; top: 671px; width: 89px; }
.at-cap-low { left: 850px; top: 676px; width: 72px; padding-right: 0; }
.at-loft { left: -40px; top: 747px; width: 54px; height: 28px; justify-content: flex-end; }
.at-cap-left { left: 39px; top: 752px; width: 62px; }
.at-mirror-left { left: 155px; top: 753px; width: 95px; }
.at-brep-a { left: 967px; top: 389px; }
.at-brep-b { left: 272px; top: 719px; }
.at-curve-a { left: 374px; top: 671px; }
.at-curve-b { left: 647px; top: 671px; }

.slider {
  position: absolute;
  display: flex;
  width: 131px;
  height: 14px;
  border: 1px solid #333;
  border-radius: 2px;
  background: linear-gradient(#f2f2f2, #ccc);
  font: 7px/12px Roboto, sans-serif;
}
.slider.bare { width: 78px; }
.slider::after {
  content: "";
  position: absolute;
  right: -4px;
  top: 3px;
  width: 4px;
  height: 6px;
  border: 1px solid #222;
  border-left: 0;
  border-radius: 0 3px 3px 0;
  background: #eee;
}
.slider label {
  width: 53px;
  border-right: 1px solid #333;
  background: linear-gradient(#a9a7b8, #85839a);
  text-align: center;
}
.rail { position: relative; flex: 1; padding: 0 6px; }
.rail input {
  appearance: none;
  display: block;
  width: 100%;
  height: 12px;
  margin: 0;
  background:
    linear-gradient(#bbb, #bbb) 0 6px / 100% 1px no-repeat,
    repeating-linear-gradient(90deg, #aaa 0 1px, transparent 1px 10px) 0 4px / 100% 4px no-repeat;
}
.rail input::-webkit-slider-thumb {
  appearance: none;
  width: 5px;
  height: 5px;
  border: 1px solid #111;
  border-radius: 50%;
  background: #fff;
}
.rail output { position: absolute; top: 0; padding: 0 1px; background: #e2e2e2; height: 11px; }
.rail .after { left: calc(var(--v) * 60px + 11px); }
.rail .before { right: calc((1 - var(--v)) * 60px + 12px); }
.at-count { left: -13px; top: 217px; }
.at-seed { left: -21px; top: 244px; }
.at-distance { left: 434px; top: 182px; }
.at-strength { left: 647px; top: 128px; }
.at-tolerance { left: 689px; top: 180px; }
.at-radius { left: 434px; top: 538px; }

.drawer {
  position: absolute;
  left: 0;
  bottom: 0;
  width: 7px;
  height: 28px;
  border: 1px solid #111;
  border-left: 0;
  background: linear-gradient(#ccc 35%, #777 40%, #999);
}
.compass { position: absolute; right: 8px; bottom: 7px; width: 48px; height: 46px; }

.status {
  display: flex;
  align-items: center;
  gap: 4px;
  height: 24px;
  padding: 2px 2px 0 6px;
  border-top: 2px solid #fff;
  background: linear-gradient(90deg, #f0f0f0, #fbfbfb);
  color: #555;
}
.version { margin-left: auto; }
.status svg { width: 12px; height: 12px; margin-top: 5px; fill: #aaa; }
```
